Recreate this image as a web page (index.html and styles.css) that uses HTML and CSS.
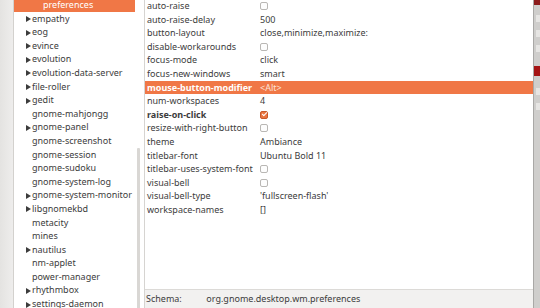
FILE: index.html
```html
<!DOCTYPE html>
<html lang="en">
<head>
    <meta charset="UTF-8">
    <title>dconf Editor - org.gnome.desktop.wm.preferences</title>
    <link rel="stylesheet" href="styles.css">
</head>
<body>
    <div class="window">
        <div class="edge"></div>
        <div class="tree">
            <ul class="nodes">
                <li class="node child selected">preferences</li>
                <li class="node parent">empathy</li>
                <li class="node parent">eog</li>
                <li class="node parent">evince</li>
                <li class="node parent">evolution</li>
                <li class="node parent">evolution-data-server</li>
                <li class="node parent">file-roller</li>
                <li class="node parent">gedit</li>
                <li class="node">gnome-mahjongg</li>
                <li class="node parent">gnome-panel</li>
                <li class="node">gnome-screenshot</li>
                <li class="node">gnome-session</li>
                <li class="node">gnome-sudoku</li>
                <li class="node">gnome-system-log</li>
                <li class="node parent">gnome-system-monitor</li>
                <li class="node parent">libgnomekbd</li>
                <li class="node">metacity</li>
                <li class="node">mines</li>
                <li class="node parent">nautilus</li>
                <li class="node">nm-applet</li>
                <li class="node">power-manager</li>
                <li class="node parent">rhythmbox</li>
                <li class="node parent">settings-daemon</li>
            </ul>
            <div class="scrollbar"></div>
        </div>
        <div class="main">
            <div class="keys" id="keys"></div>
            <div class="schema">
                <span class="schema-label">Schema:</span>
                <span>org.gnome.desktop.wm.preferences</span>
            </div>
        </div>
        <div class="other">
            <div class="other-title"></div>
            <div class="other-line"></div>
            <div class="other-line"></div>
            <div class="other-line"></div>
            <div class="other-red"></div>
            <div class="other-line"></div>
            <div class="other-line"></div>
        </div>
    </div>
    <script>
        // key, value, type ('check' / 'checked' for booleans)
        const keys = [
            ['auto-raise', '', 'check'],
            ['auto-raise-delay', '500'],
            ['button-layout', 'close,minimize,maximize:'],
            ['disable-workarounds', '', 'check'],
            ['focus-mode', 'click'],
            ['focus-new-windows', 'smart'],
            ['mouse-button-modifier', '<Alt>', 'selected'],
            ['num-workspaces', '4'],
            ['raise-on-click', '', 'checked'],
            ['resize-with-right-button', '', 'check'],
            ['theme', 'Ambiance'],
            ['titlebar-font', 'Ubuntu Bold 11'],
            ['titlebar-uses-system-font', '', 'check'],
            ['visual-bell', '', 'check'],
            ['visual-bell-type', '\'fullscreen-flash\''],
            ['workspace-names', '[]']
        ];

        const list = document.getElementById('keys');
        keys.forEach(([name, value, type]) => {
            const row = document.createElement('div');
            row.className = 'row';
            if (type === 'selected') row.classList.add('selected');
            if (type === 'checked') row.classList.add('changed');

            const key = document.createElement('span');
            key.className = 'key';
            key.textContent = name;

            const val = document.createElement('span');
            val.className = 'value';
            if (type === 'check' || type === 'checked') {
                const box = document.createElement('span');
                box.className = type === 'checked' ? 'box on' : 'box';
                val.appendChild(box);
            } else {
                val.textContent = value;
            }

            row.appendChild(key);
            row.appendChild(val);
            list.appendChild(row);
        });
    </script>
</body>
</html>
```

FILE: styles.css
```css
body {
    margin: 0;
    width: 540px;
    height: 308px;
    overflow: hidden;
    background: #f2f1f0;
    font-family: 'Noto Sans', 'DejaVu Sans', sans-serif;
    font-size: 9px;
    color: #3c3c3c;
}
.window {
    display: flex;
    height: 308px;
}
.edge {
    width: 13px;
    background: linear-gradient(to right, #e4e3e1, #eeedec);
    border-right: 1px solid #d3d1ce;
}
.tree {
    position: relative;
    width: 130px;
    background: #fff;
    border-right: 1px solid #d6d4d1;
    overflow: hidden;
}
.nodes {
    list-style: none;
    margin: -2px 0 0;
    padding: 0;
}
.node {
    height: 13.6px;
    line-height: 13.6px;
    padding-left: 18px;
    white-space: nowrap;
}
.node.parent::before {
    content: '';
    display: inline-block;
    width: 0;
    height: 0;
    margin: 0 1px 0 -6px;
    border-top: 3px solid transparent;
    border-bottom: 3px solid transparent;
    border-left: 5px solid #3c3c3c;
    vertical-align: -0.5px;
}
.node.child {
    padding-left: 29px;
}
.node.selected {
    height: 12.6px;
    line-height: 11.6px;
    margin-right: 9px;
    margin-top: -1px;
    padding-top: 1px;
    background: #f07746;
    color: #fff;
}
.scrollbar {
    position: absolute;
    right: 4px;
    top: 148px;
    width: 3px;
    height: 170px;
    background: #d9d7d4;
    border-radius: 1px;
}
.main {
    display: flex;
    flex-direction: column;
    width: 388px;
}
.keys {
    flex: 1;
    background: #fff;
    border-bottom: 1px solid #dcdad7;
    overflow: hidden;
}
.row {
    display: flex;
    height: 13.6px;
    line-height: 13.6px;
    white-space: nowrap;
}
.row:first-child {
    margin-top: -1px;
}
.key {
    width: 113px;
    padding-left: 2px;
}
.value {
    display: flex;
    align-items: center;
}
.row.selected {
    background: #f07746;
    color: #fff;
}
.row.selected .key {
    font-weight: bold;
}
.row.selected .value {
    color: #fde4d8;
}
.row.changed .key {
    font-weight: bold;
}
.box {
    display: inline-block;
    box-sizing: border-box;
    width: 8px;
    height: 8px;
    border: 1px solid #b9b7b4;
    border-radius: 2px;
    background: #fdfdfd;
}
.box.on {
    position: relative;
    border-color: #c8582a;
    background: #e9743f;
}
.box.on::after {
    content: '';
    position: absolute;
    left: 1px;
    top: 0;
    width: 4px;
    height: 2px;
    border-left: 1.5px solid #fff;
    border-bottom: 1.5px solid #fff;
    transform: rotate(-45deg);
}
.schema {
    height: 18px;
    line-height: 18px;
    padding-left: 1px;
    background: #f2f1f0;
    white-space: nowrap;
}
.schema-label {
    display: inline-block;
    width: 58px;
}
.other {
    flex: 1;
    background: #cfcecc;
    border-left: 1px solid #a9a8a6;
}
.other-title {
    height: 5px;
    background: #8c1c1c;
    margin-bottom: 10px;
}
.other-line {
    height: 7px;
    margin: 0 0 8px 2px;
    background: #e6e5e3;
}
.other-red {
    height: 10px;
    margin: 14px 0 12px;
    background: #a51414;
}
```
